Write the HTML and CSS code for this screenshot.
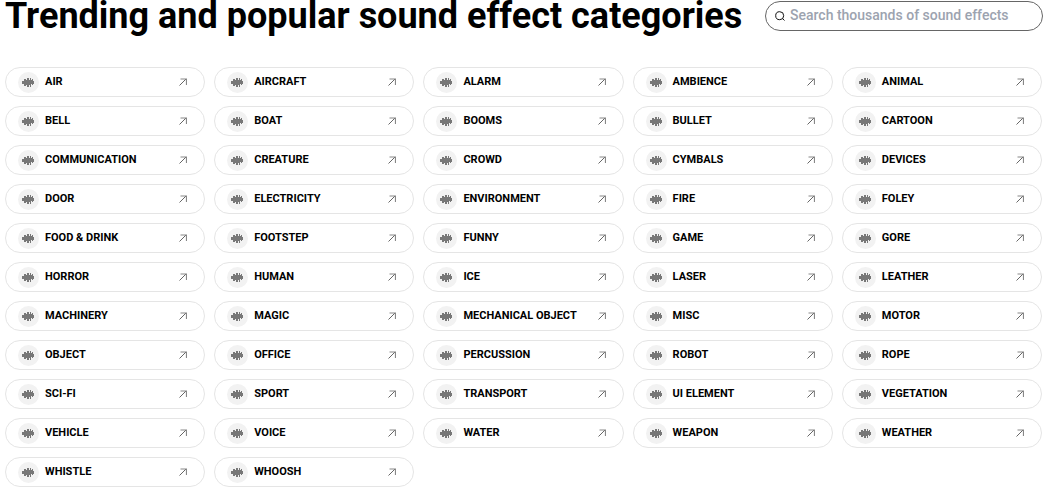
FILE: index.html
```
<!DOCTYPE html>
<html lang="en">
<head>
    <meta charset="UTF-8">
    <meta name="viewport" content="width=device-width, initial-scale=1.0">
    <title>Sound effect categories</title>
    <link rel="stylesheet" href="styles.css">
</head>
<body>
    <svg class="sprite" aria-hidden="true">
        <symbol id="wave" viewBox="0 0 12 11">
            <path d="M0 4h2v3h-2zM2 2h2v7h-2zM4 3h1v5h-1zM5 1h2v9h-2zM7 3h1v5h-1zM8 1h1v9h-1zM9 3h1v4h-1zM10 2h1v6h-1zM11 4h1v3h-1z"/>
        </symbol>
        <symbol id="arrow" viewBox="0 0 8 8">
            <path d="M.5 7.500 7 1" fill="none" stroke="#666"/>
            <path d="M1.500 1h6v6" fill="none" stroke="#888" stroke-width="1.200"/>
        </symbol>
    </svg>

    <header class="header">
        <h1 class="title">Trending and popular sound effect categories</h1>
        <form class="search" role="search">
            <label class="search-label" for="search">
                <svg class="search-icon" viewBox="0 0 10 10" role="img" aria-label="Search">
                    <path d="M7.500 7.500 9.500 9.500"/><circle cx="4.700" cy="4.700" r="4"/>
                </svg>
            </label>
            <input class="search-input" id="search" type="text" placeholder="Search thousands of sound effects">
        </form>
    </header>

    <main class="categories">
        <a class="category" href="#"><span class="badge"><svg class="wave"><use href="#wave"/></svg></span><span class="name">AIR</span><svg class="arrow"><use href="#arrow"/></svg></a>
        <a class="category" href="#"><span class="badge"><svg class="wave"><use href="#wave"/></svg></span><span class="name">AIRCRAFT</span><svg class="arrow"><use href="#arrow"/></svg></a>
        <a class="category" href="#"><span class="badge"><svg class="wave"><use href="#wave"/></svg></span><span class="name">ALARM</span><svg class="arrow"><use href="#arrow"/></svg></a>
        <a class="category" href="#"><span class="badge"><svg class="wave"><use href="#wave"/></svg></span><span class="name">AMBIENCE</span><svg class="arrow"><use href="#arrow"/></svg></a>
        <a class="category" href="#"><span class="badge"><svg class="wave"><use href="#wave"/></svg></span><span class="name">ANIMAL</span><svg class="arrow"><use href="#arrow"/></svg></a>
        <a class="category" href="#"><span class="badge"><svg class="wave"><use href="#wave"/></svg></span><span class="name">BELL</span><svg class="arrow"><use href="#arrow"/></svg></a>
        <a class="category" href="#"><span class="badge"><svg class="wave"><use href="#wave"/></svg></span><span class="name">BOAT</span><svg class="arrow"><use href="#arrow"/></svg></a>
        <a class="category" href="#"><span class="badge"><svg class="wave"><use href="#wave"/></svg></span><span class="name">BOOMS</span><svg class="arrow"><use href="#arrow"/></svg></a>
        <a class="category" href="#"><span class="badge"><svg class="wave"><use href="#wave"/></svg></span><span class="name">BULLET</span><svg class="arrow"><use href="#arrow"/></svg></a>
        <a class="category" href="#"><span class="badge"><svg class="wave"><use href="#wave"/></svg></span><span class="name">CARTOON</span><svg class="arrow"><use href="#arrow"/></svg></a>
        <a class="category" href="#"><span class="badge"><svg class="wave"><use href="#wave"/></svg></span><span class="name">COMMUNICATION</span><svg class="arrow"><use href="#arrow"/></svg></a>
        <a class="category" href="#"><span class="badge"><svg class="wave"><use href="#wave"/></svg></span><span class="name">CREATURE</span><svg class="arrow"><use href="#arrow"/></svg></a>
        <a class="category" href="#"><span class="badge"><svg class="wave"><use href="#wave"/></svg></span><span class="name">CROWD</span><svg class="arrow"><use href="#arrow"/></svg></a>
        <a class="category" href="#"><span class="badge"><svg class="wave"><use href="#wave"/></svg></span><span class="name">CYMBALS</span><svg class="arrow"><use href="#arrow"/></svg></a>
        <a class="category" href="#"><span class="badge"><svg class="wave"><use href="#wave"/></svg></span><span class="name">DEVICES</span><svg class="arrow"><use href="#arrow"/></svg></a>
        <a class="category" href="#"><span class="badge"><svg class="wave"><use href="#wave"/></svg></span><span class="name">DOOR</span><svg class="arrow"><use href="#arrow"/></svg></a>
        <a class="category" href="#"><span class="badge"><svg class="wave"><use href="#wave"/></svg></span><span class="name">ELECTRICITY</span><svg class="arrow"><use href="#arrow"/></svg></a>
        <a class="category" href="#"><span class="badge"><svg class="wave"><use href="#wave"/></svg></span><span class="name">ENVIRONMENT</span><svg class="arrow"><use href="#arrow"/></svg></a>
        <a class="category" href="#"><span class="badge"><svg class="wave"><use href="#wave"/></svg></span><span class="name">FIRE</span><svg class="arrow"><use href="#arrow"/></svg></a>
        <a class="category" href="#"><span class="badge"><svg class="wave"><use href="#wave"/></svg></span><span class="name">FOLEY</span><svg class="arrow"><use href="#arrow"/></svg></a>
        <a class="category" href="#"><span class="badge"><svg class="wave"><use href="#wave"/></svg></span><span class="name">FOOD &amp; DRINK</span><svg class="arrow"><use href="#arrow"/></svg></a>
        <a class="category" href="#"><span class="badge"><svg class="wave"><use href="#wave"/></svg></span><span class="name">FOOTSTEP</span><svg class="arrow"><use href="#arrow"/></svg></a>
        <a class="category" href="#"><span class="badge"><svg class="wave"><use href="#wave"/></svg></span><span class="name">FUNNY</span><svg class="arrow"><use href="#arrow"/></svg></a>
        <a class="category" href="#"><span class="badge"><svg class="wave"><use href="#wave"/></svg></span><span class="name">GAME</span><svg class="arrow"><use href="#arrow"/></svg></a>
        <a class="category" href="#"><span class="badge"><svg class="wave"><use href="#wave"/></svg></span><span class="name">GORE</span><svg class="arrow"><use href="#arrow"/></svg></a>
        <a class="category" href="#"><span class="badge"><svg class="wave"><use href="#wave"/></svg></span><span class="name">HORROR</span><svg class="arrow"><use href="#arrow"/></svg></a>
        <a class="category" href="#"><span class="badge"><svg class="wave"><use href="#wave"/></svg></span><span class="name">HUMAN</span><svg class="arrow"><use href="#arrow"/></svg></a>
        <a class="category" href="#"><span class="badge"><svg class="wave"><use href="#wave"/></svg></span><span class="name">ICE</span><svg class="arrow"><use href="#arrow"/></svg></a>
        <a class="category" href="#"><span class="badge"><svg class="wave"><use href="#wave"/></svg></span><span class="name">LASER</span><svg class="arrow"><use href="#arrow"/></svg></a>
        <a class="category" href="#"><span class="badge"><svg class="wave"><use href="#wave"/></svg></span><span class="name">LEATHER</span><svg class="arrow"><use href="#arrow"/></svg></a>
        <a class="category" href="#"><span class="badge"><svg class="wave"><use href="#wave"/></svg></span><span class="name">MACHINERY</span><svg class="arrow"><use href="#arrow"/></svg></a>
        <a class="category" href="#"><span class="badge"><svg class="wave"><use href="#wave"/></svg></span><span class="name">MAGIC</span><svg class="arrow"><use href="#arrow"/></svg></a>
        <a class="category" href="#"><span class="badge"><svg class="wave"><use href="#wave"/></svg></span><span class="name">MECHANICAL OBJECT</span><svg class="arrow"><use href="#arrow"/></svg></a>
        <a class="category" href="#"><span class="badge"><svg class="wave"><use href="#wave"/></svg></span><span class="name">MISC</span><svg class="arrow"><use href="#arrow"/></svg></a>
        <a class="category" href="#"><span class="badge"><svg class="wave"><use href="#wave"/></svg></span><span class="name">MOTOR</span><svg class="arrow"><use href="#arrow"/></svg></a>
        <a class="category" href="#"><span class="badge"><svg class="wave"><use href="#wave"/></svg></span><span class="name">OBJECT</span><svg class="arrow"><use href="#arrow"/></svg></a>
        <a class="category" href="#"><span class="badge"><svg class="wave"><use href="#wave"/></svg></span><span class="name">OFFICE</span><svg class="arrow"><use href="#arrow"/></svg></a>
        <a class="category" href="#"><span class="badge"><svg class="wave"><use href="#wave"/></svg></span><span class="name">PERCUSSION</span><svg class="arrow"><use href="#arrow"/></svg></a>
        <a class="category" href="#"><span class="badge"><svg class="wave"><use href="#wave"/></svg></span><span class="name">ROBOT</span><svg class="arrow"><use href="#arrow"/></svg></a>
        <a class="category" href="#"><span class="badge"><svg class="wave"><use href="#wave"/></svg></span><span class="name">ROPE</span><svg class="arrow"><use href="#arrow"/></svg></a>
        <a class="category" href="#"><span class="badge"><svg class="wave"><use href="#wave"/></svg></span><span class="name">SCI-FI</span><svg class="arrow"><use href="#arrow"/></svg></a>
        <a class="category" href="#"><span class="badge"><svg class="wave"><use href="#wave"/></svg></span><span class="name">SPORT</span><svg class="arrow"><use href="#arrow"/></svg></a>
        <a class="category" href="#"><span class="badge"><svg class="wave"><use href="#wave"/></svg></span><span class="name">TRANSPORT</span><svg class="arrow"><use href="#arrow"/></svg></a>
        <a class="category" href="#"><span class="badge"><svg class="wave"><use href="#wave"/></svg></span><span class="name">UI ELEMENT</span><svg class="arrow"><use href="#arrow"/></svg></a>
        <a class="category" href="#"><span class="badge"><svg class="wave"><use href="#wave"/></svg></span><span class="name">VEGETATION</span><svg class="arrow"><use href="#arrow"/></svg></a>
        <a class="category" href="#"><span class="badge"><svg class="wave"><use href="#wave"/></svg></span><span class="name">VEHICLE</span><svg class="arrow"><use href="#arrow"/></svg></a>
        <a class="category" href="#"><span class="badge"><svg class="wave"><use href="#wave"/></svg></span><span class="name">VOICE</span><svg class="arrow"><use href="#arrow"/></svg></a>
        <a class="category" href="#"><span class="badge"><svg class="wave"><use href="#wave"/></svg></span><span class="name">WATER</span><svg class="arrow"><use href="#arrow"/></svg></a>
        <a class="category" href="#"><span class="badge"><svg class="wave"><use href="#wave"/></svg></span><span class="name">WEAPON</span><svg class="arrow"><use href="#arrow"/></svg></a>
        <a class="category" href="#"><span class="badge"><svg class="wave"><use href="#wave"/></svg></span><span class="name">WEATHER</span><svg class="arrow"><use href="#arrow"/></svg></a>
        <a class="category" href="#"><span class="badge"><svg class="wave"><use href="#wave"/></svg></span><span class="name">WHISTLE</span><svg class="arrow"><use href="#arrow"/></svg></a>
        <a class="category" href="#"><span class="badge"><svg class="wave"><use href="#wave"/></svg></span><span class="name">WHOOSH</span><svg class="arrow"><use href="#arrow"/></svg></a>
    </main>
</body>
</html>
```
FILE: styles.css
```
* {
    box-sizing: border-box;
}
body {
    margin: 0;
    padding-left: 5px;
    background-color: #fff;
    color: #000;
    font-family: Roboto, "Liberation Sans", sans-serif;
}
.sprite {
    display: none;
}
.header {
    display: flex;
    align-items: center;
    justify-content: space-between;
    gap: 22px;
    height: 32px;
    margin-bottom: 35px;
}
.title {
    margin: 0;
    font-size: 36px;
    font-weight: 700;
    line-height: 32px;
    white-space: nowrap;
}
.search {
    display: flex;
    align-items: center;
    flex: 0 1 278px;
    min-width: 0;
    height: 30px;
    padding: 0 9px;
    gap: 5px;
    border: 1px solid #666;
    border-radius: 15px;
}
.search-label {
    display: flex;
}
.search-icon {
    width: 10px;
    height: 10px;
    fill: none;
    stroke: #111;
}
.search-input {
    flex: 1;
    min-width: 0;
    padding: 0 0 2px;
    border: none;
    outline: none;
    background: none;
    font-family: inherit;
    font-size: 14px;
    font-weight: 500;
}
.search-input::placeholder {
    color: #9ca3af;
}
.categories {
    display: grid;
    grid-template-columns: repeat(5, 1fr);
    gap: 9px;
    padding-right: 1px;
}
.category {
    display: flex;
    align-items: center;
    height: 30px;
    padding: 0 17px 0 12px;
    border: 1px solid #e5e5e5;
    border-radius: 15px;
    color: #000;
    font-size: 11px;
    font-weight: 700;
    text-decoration: none;
    white-space: nowrap;
}
.name {
    padding-bottom: 2px;
}
.badge {
    display: flex;
    align-items: center;
    justify-content: center;
    width: 21px;
    height: 21px;
    margin-right: 6px;
    padding-right: 1px;
    border-radius: 50%;
    background-color: #f2f2f2;
}
.wave {
    width: 12px;
    height: 11px;
    fill: #777;
}
.arrow {
    width: 8px;
    height: 8px;
    margin-left: auto;
}
```
